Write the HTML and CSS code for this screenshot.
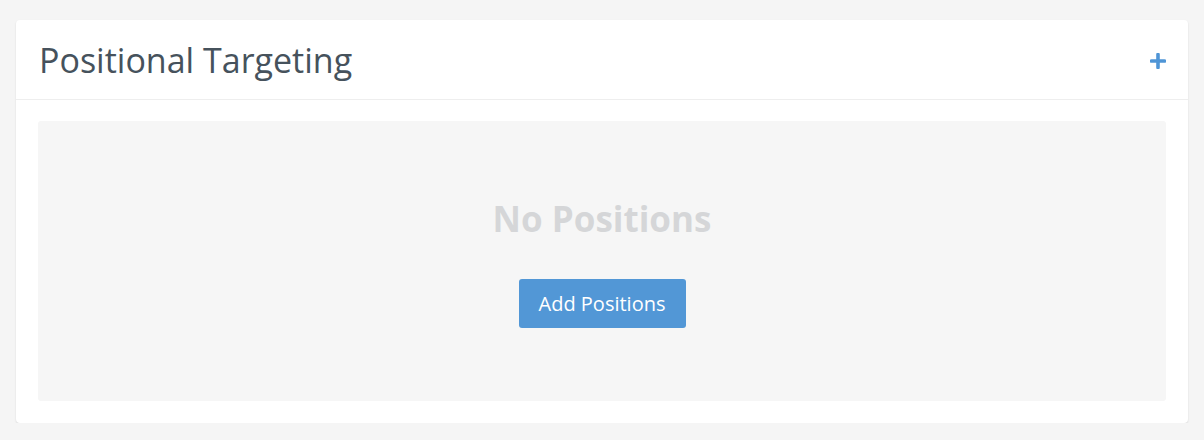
FILE: index.html
```html
<!DOCTYPE html>
<html>
<head>
<meta charset="utf-8">
<link rel="stylesheet" href="styles.css">
</head>
<body>
<div class="card">
  <div class="card-header">
    <h2 class="title">Positional Targeting</h2>
    <button class="add-icon" aria-label="Add">
      <svg width="16" height="16" viewBox="0 0 16 16"><path d="M8 1.5v13M1.5 8h13" stroke="#4f95d6" stroke-width="3.6" stroke-linecap="round"/></svg>
    </button>
  </div>
  <div class="card-body">
    <div class="empty">
      <div class="empty-title">No Positions</div>
      <button class="btn-primary">Add Positions</button>
    </div>
  </div>
</div>
</body>
</html>
```
FILE: styles.css
```css
* { box-sizing: border-box; }
html, body { margin: 0; padding: 0; }
body {
  background: #f5f5f5;
  font-family: "Open Sans", "Liberation Sans", sans-serif;
  padding: 20px 16px 0 16px;
}
.card {
  background: #ffffff;
  border-radius: 4px;
  box-shadow: 0 1px 2px rgba(0,0,0,0.12);
  width: 1172px;
}
.card-header {
  height: 80px;
  border-bottom: 1px solid #eeeeee;
  display: flex;
  align-items: center;
  justify-content: space-between;
  padding: 0 22px 0 23px;
}
.title {
  margin: 0;
  font-weight: 400;
  font-size: 34px;
  color: #46525c;
  letter-spacing: 0;
}
.add-icon {
  background: none;
  border: 0;
  padding: 0;
  display: flex;
  margin-top: 2px;
}
.card-body {
  padding: 21px 22px 22px 22px;
}
.empty {
  background: #f6f6f6;
  border-radius: 3px;
  height: 280px;
  display: flex;
  flex-direction: column;
  align-items: center;
  padding-top: 78px;
}
.empty-title {
  font-size: 35px;
  font-weight: 700;
  line-height: 40px;
  color: #d5d6d8;
  margin-bottom: 40px;
}
.btn-primary {
  font-family: "Open Sans", "Liberation Sans", sans-serif;
  background: #5297d6;
  color: #ffffff;
  border: 0;
  border-radius: 3px;
  height: 49px;
  width: 167px;
  font-size: 20px;
  padding: 0;
}
```
